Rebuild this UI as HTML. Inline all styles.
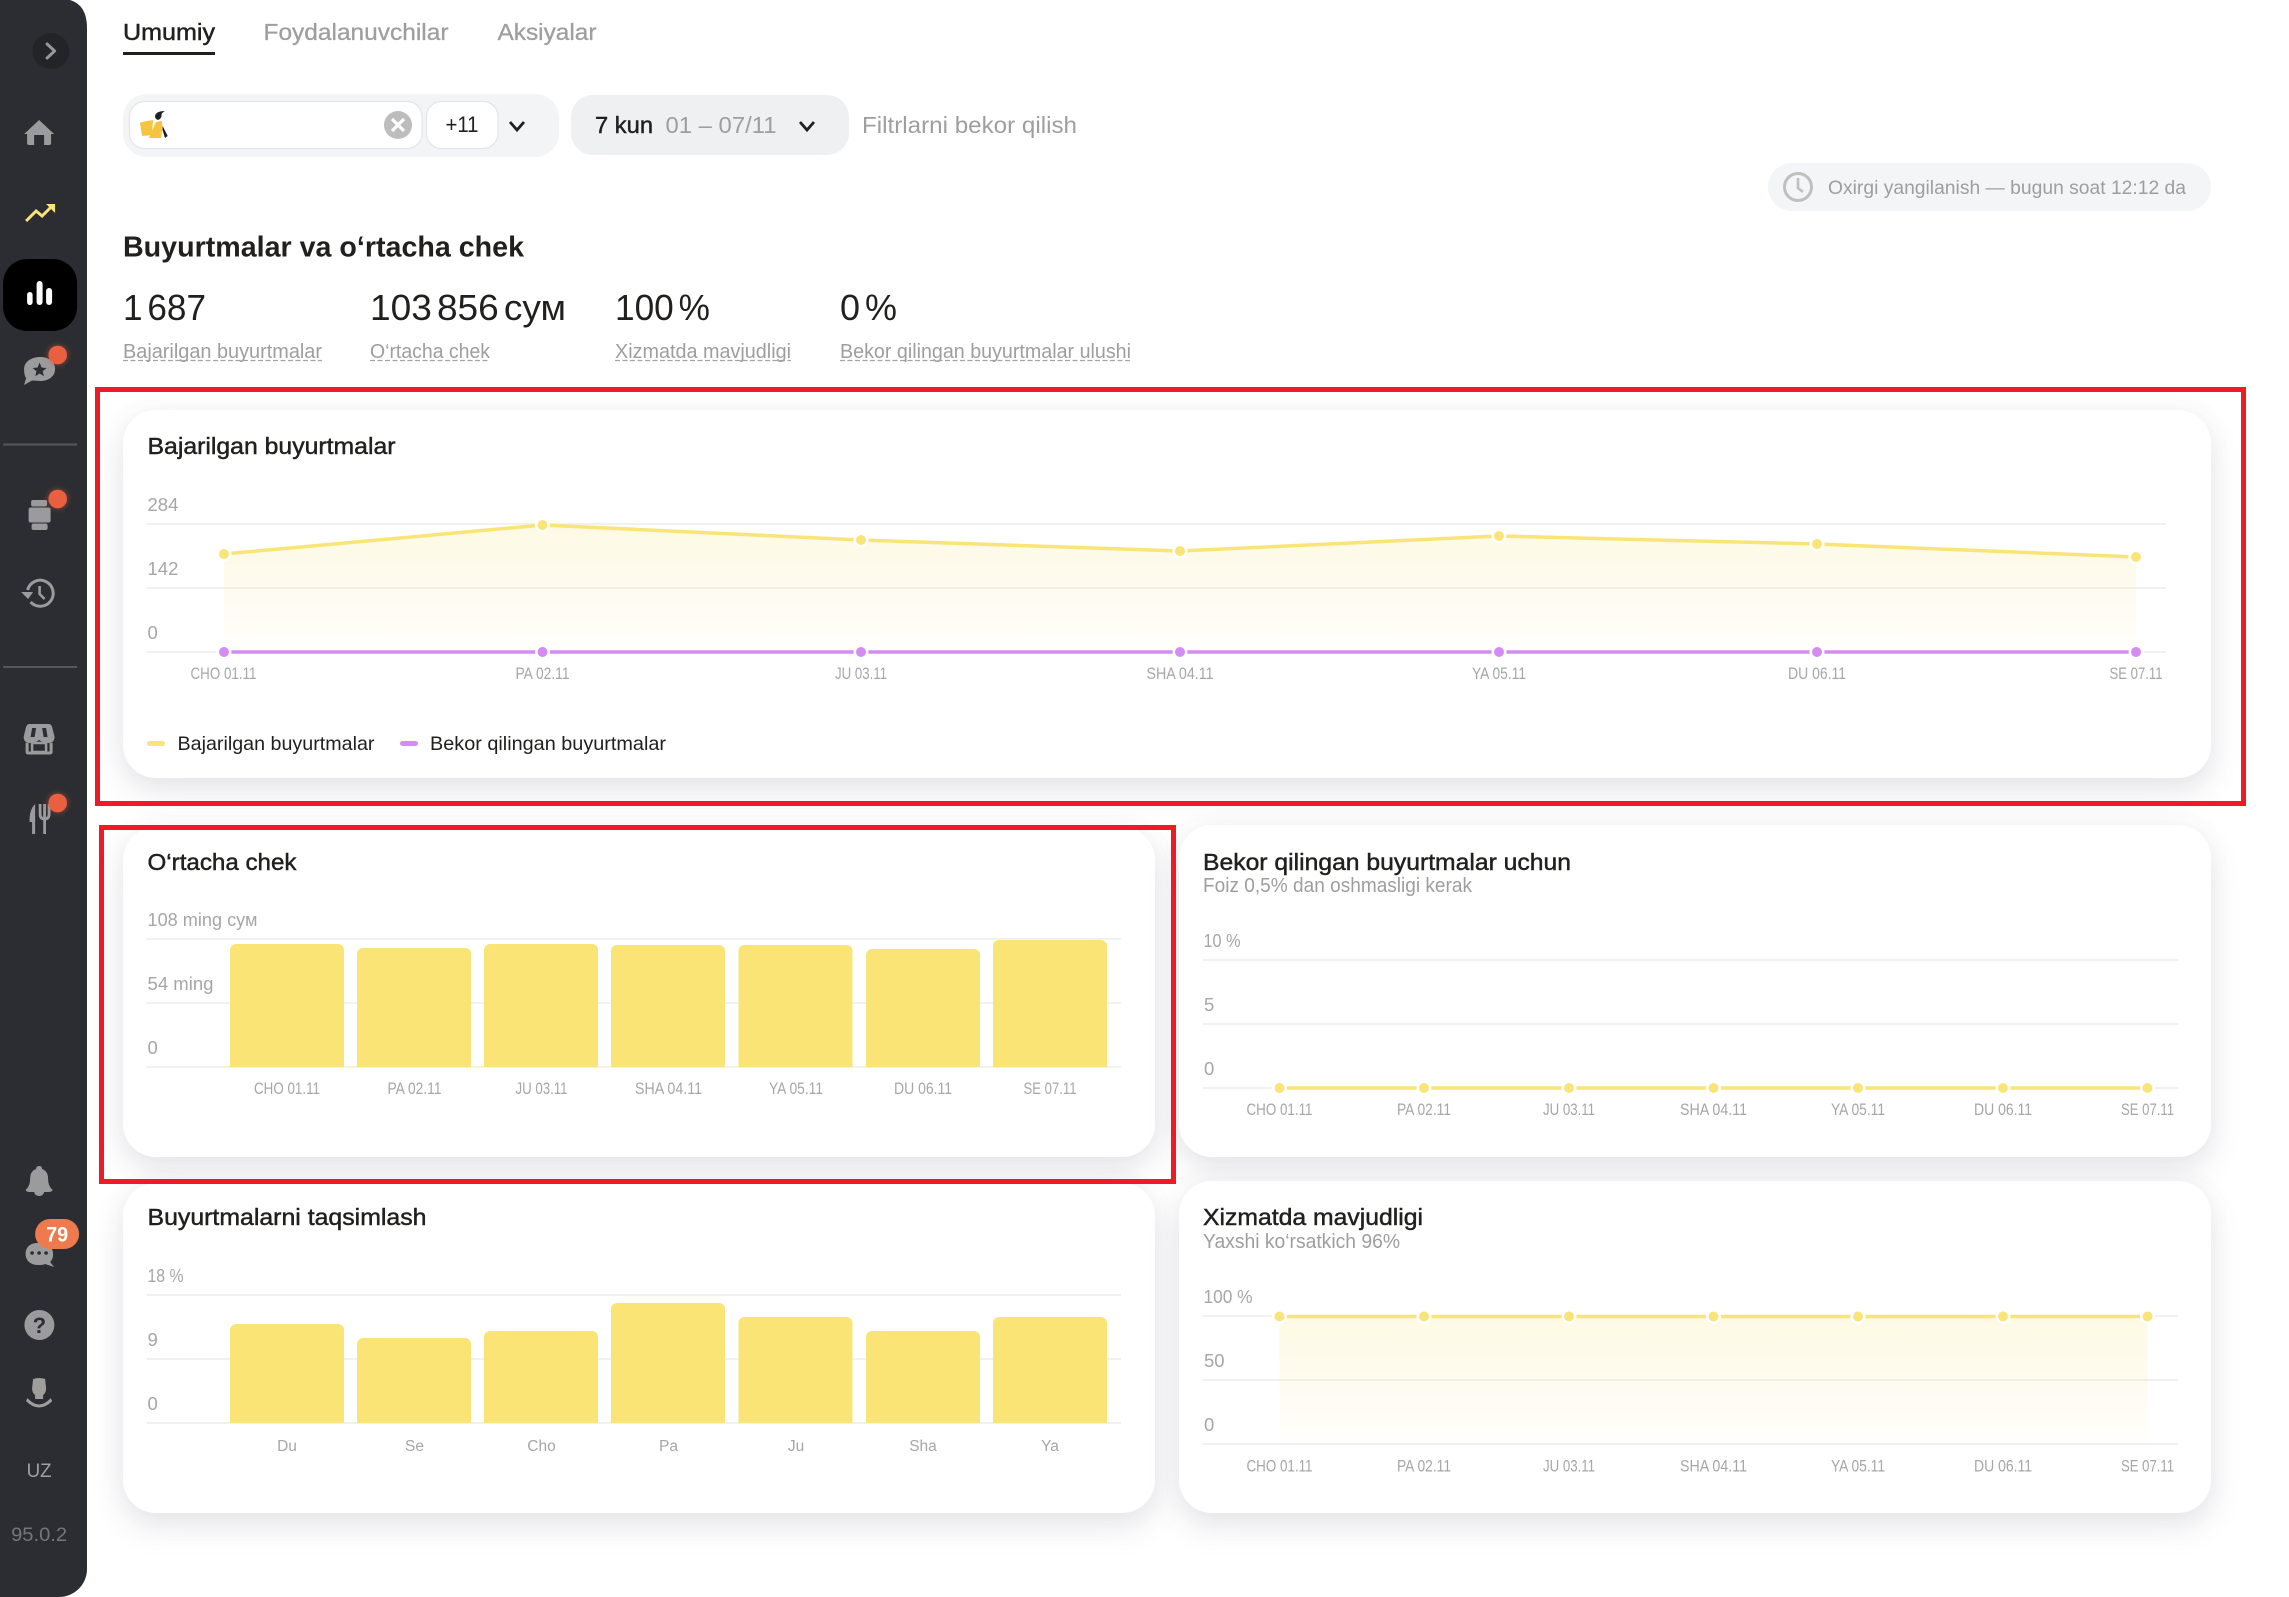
<!DOCTYPE html>
<html lang="uz">
<head>
<meta charset="utf-8">
<title>Statistika</title>
<style>
html,body{margin:0;padding:0;background:#fff;width:2289px;height:1597px;overflow:hidden}
.card{position:absolute;background:#fff;border-radius:33px;box-shadow:0 14px 32px rgba(90,95,110,.14),0 0 24px rgba(90,95,110,.05)}
svg{position:absolute;left:0;top:0}
text{font-family:"Liberation Sans",sans-serif;fill:#21201f}
.g{fill:#a3a3a3}
.s{fill:#9e9e9e}
.m{stroke:#21201f;stroke-width:.45px}
.gl{stroke:#000;stroke-opacity:.055;stroke-width:2}
.ax{font-size:17px;fill:#a6a6a6;text-anchor:middle}
.dy{font-size:15.5px}
.yl{font-size:18.5px;fill:#a6a6a6}
.ic{fill:#9b9b9d}
.t{font-size:23px}
.st{font-size:36px;word-spacing:-5px}
</style>
</head>
<body>
<div class="card" style="left:123px;top:410px;width:2088px;height:368px"></div>
<div class="card" style="left:123px;top:827px;width:1032px;height:330px"></div>
<div class="card" style="left:1179px;top:825px;width:1032px;height:332px"></div>
<div class="card" style="left:123px;top:1183px;width:1032px;height:330px"></div>
<div class="card" style="left:1179px;top:1181px;width:1032px;height:332px"></div>

<svg width="2289" height="1597" viewBox="0 0 2289 1597" xmlns="http://www.w3.org/2000/svg">
<defs>
<linearGradient id="ar" x1="0" y1="0" x2="0" y2="1"><stop offset="0" stop-color="#fdf9e4"/><stop offset="1" stop-color="#fffefb"/></linearGradient>
<clipPath id="c1"><rect x="200" y="900" width="950" height="167"/></clipPath>
<clipPath id="c2"><rect x="200" y="1260" width="950" height="163"/></clipPath>
<filter id="glow" x="-60%" y="-60%" width="220%" height="220%"><feGaussianBlur stdDeviation="3"/></filter>
</defs>

<!-- Sidebar -->
<path d="M0 0H70Q87 5 87 28V1569A28 28 0 0 1 59 1597H0Z" fill="#2b2d32"/>
<g transform="translate(-0.9 0)">
<ellipse cx="51.7" cy="51" rx="18.5" ry="18" fill="#222428"/>
<path d="M48 44L55.500 51L48 58" fill="none" stroke="#97979a" stroke-width="3" stroke-linecap="round" stroke-linejoin="round"/>
<path class="ic" d="M40 120L55 134H52V143Q52 145 50 145H45V135H35V145H30Q28 145 28 143V134H25Z"/>
<path d="M27 221L37 211L43 216L52 207" fill="none" stroke="#f9e477" stroke-width="3"/>
<path d="M47 204H56V213Z" fill="#f9e477"/>
<rect x="4" y="259" width="74" height="72" rx="24" fill="#000"/>
<rect x="28" y="292" width="5.500" height="13" rx="2.700" fill="#fff"/>
<rect x="37.500" y="281" width="6" height="24" rx="3" fill="#fff"/>
<rect x="47" y="288" width="6" height="17" rx="3" fill="#fff"/>
<path class="ic" d="M41 357C50 357 56 362 56 369C56 376 50 381 41 381C37 381 34 380 32 381L25 385L27 378C25.500 376 25 373 25 369C25 362 32 357 41 357Z"/>
<path d="M40.500 362.500L42.500 367.500L47.500 368L43.600 371.300L44.800 376.300L40.500 373.500L36.200 376.300L37.400 371.300L33.500 368L38.500 367.500Z" fill="#2b2d32"/>
<circle cx="58.600" cy="355" r="10" fill="#ea5f40" opacity=".45" filter="url(#glow)"/>
<circle cx="58.600" cy="355" r="9.300" fill="#ea5f40"/>
<rect x="4" y="443.500" width="74" height="2" fill="#55575c"/>
<rect x="32" y="500" width="16" height="6.500" rx="2" class="ic"/>
<rect x="29.500" y="507.500" width="22" height="15" rx="2" class="ic"/>
<rect x="32.500" y="523.500" width="16" height="6.500" rx="2" class="ic"/>
<circle cx="58.600" cy="499" r="10" fill="#ea5f40" opacity=".45" filter="url(#glow)"/>
<circle cx="58.600" cy="499" r="9.300" fill="#ea5f40"/>
<path d="M28.500 590A13 13 0 1 1 31.500 602" fill="none" stroke="#9b9b9d" stroke-width="3"/>
<path class="ic" d="M22 592H34L29 599Z"/>
<path d="M40.500 586V594L45.500 599" fill="none" stroke="#9b9b9d" stroke-width="2.600"/>
<rect x="4" y="666" width="74" height="2" fill="#55575c"/>
<path class="ic" d="M30 724H50Q52 724 53 727L55.500 737Q55 743 50 743Q44 743 40 740Q36 743 30 743Q25 743 24.500 737L27 727Q28 724 30 724Z"/>
<path d="M33 728H37L35.500 737H31.500ZM43 728H47L48.500 737H44.500Z" fill="#2b2d32"/>
<path d="M28 743V752Q28 753 29.500 753H50.500Q52 753 52 752V743" fill="none" stroke="#9b9b9d" stroke-width="3"/>
<rect x="33" y="743" width="14" height="9" fill="none" stroke="#9b9b9d" stroke-width="2.500"/>
<path class="ic" d="M36 804Q30 810 30.500 822H33V834H36Z"/>
<path d="M41 804V814Q41 819 45.500 819Q50 819 50 814V804M45.500 804V834" fill="none" stroke="#9b9b9d" stroke-width="2.800"/>
<circle cx="58.600" cy="803" r="10" fill="#ea5f40" opacity=".45" filter="url(#glow)"/>
<circle cx="58.600" cy="803" r="9.300" fill="#ea5f40"/>
<path class="ic" d="M40 1166Q43 1166 43 1169Q49 1171 49 1179Q49 1186 53.500 1190Q53 1192 49 1192H45Q44 1196 40 1196Q36 1196 35 1192H31Q27 1192 26.500 1190Q31 1186 31 1179Q31 1171 37 1169Q37 1166 40 1166Z"/>
<path class="ic" d="M39 1243C48 1243 54 1247 54 1254C54 1258 53 1260 51 1262L55 1267L46 1264C44 1265 42 1265 39 1265C31 1265 26.500 1260 26.500 1254C26.500 1247 31 1243 39 1243Z"/>
<circle cx="33" cy="1253" r="1.800" fill="#2b2d32"/><circle cx="40" cy="1253" r="1.800" fill="#2b2d32"/><circle cx="47" cy="1253" r="1.800" fill="#2b2d32"/>
<rect x="36" y="1219" width="44" height="30" rx="15" fill="#ee7b4d"/>
<text x="58" y="1241.500" font-size="21" text-anchor="middle" textLength="22" lengthAdjust="spacingAndGlyphs" style="fill:#fff;font-weight:700">79</text>
<circle cx="40.300" cy="1325" r="15" class="ic"/>
<text x="40.300" y="1333" font-size="22" text-anchor="middle" style="fill:#2b2d32;font-weight:700">?</text>
<path d="M34 1379Q40 1377 46 1379L47 1388Q47 1393 44 1395V1399H36V1395Q33 1393 33 1388Z" fill="#a09e9c"/>
<path d="M28.500 1399Q40 1411 51.500 1399L52.500 1401Q40 1413 27.500 1401Z" fill="#a09e9c" stroke="#a09e9c" stroke-width="1"/>
<text x="27.500" y="1477" font-size="19" textLength="25" lengthAdjust="spacingAndGlyphs" style="fill:#a0a0a2">UZ</text>
<text x="12" y="1541" font-size="19" textLength="56" lengthAdjust="spacingAndGlyphs" style="fill:#75767a">95.0.2</text>
</g>

<!-- Tabs -->
<text x="123" y="40" font-size="23" class="m" textLength="92" lengthAdjust="spacingAndGlyphs">Umumiy</text>
<rect x="123" y="52" width="92" height="3" fill="#21201f"/>
<text x="263.500" y="40" font-size="23" class="s" textLength="185" lengthAdjust="spacingAndGlyphs" stroke="#9e9e9e" stroke-width=".3">Foydalanuvchilar</text>
<text x="497.500" y="40" font-size="23" class="s" textLength="99" lengthAdjust="spacingAndGlyphs" stroke="#9e9e9e" stroke-width=".3">Aksiyalar</text>

<!-- Filters -->
<rect x="123" y="94" width="436" height="63" rx="24" fill="#f3f4f5"/>
<rect x="129.500" y="101.500" width="292.500" height="47" rx="15" fill="#fff" stroke="#e4e5e7" stroke-width="1.200"/>
<path d="M140 123L142 122L153 120L152 135L142 136Z" fill="#f5c53f"/>
<path d="M156 122L162 121L162.500 128L161 138H149Z" fill="#f5c53f"/>
<path d="M155 116Q156 111 165 111Q161 113 161.500 116Q161 119 158 120Q155 119 155 116Z" fill="#21201f"/>
<path d="M162.700 126L167.700 136L165 138L162.500 130Z" fill="#21201f"/>
<circle cx="398" cy="125" r="14" fill="#bdbdbd"/>
<path d="M392 119L404 131M404 119L392 131" stroke="#fff" stroke-width="3.200"/>
<rect x="426.500" y="101.500" width="71.500" height="47" rx="15" fill="#fff" stroke="#e4e5e7" stroke-width="1.200"/>
<text x="445.500" y="132" font-size="22" textLength="33" lengthAdjust="spacingAndGlyphs">+11</text>
<path d="M510 122L517 130L524 122" fill="none" stroke="#21201f" stroke-width="2.800"/>
<rect x="571" y="95" width="278" height="60" rx="22" fill="#eff0f2"/>
<text x="595" y="133" font-size="23" class="m" textLength="58" lengthAdjust="spacingAndGlyphs">7 kun</text>
<text x="665.500" y="133" font-size="23" class="s" textLength="111" lengthAdjust="spacingAndGlyphs">01 – 07/11</text>
<path d="M800 122L807 130L814 122" fill="none" stroke="#21201f" stroke-width="2.800"/>
<text x="862" y="133" font-size="23" class="s" textLength="215" lengthAdjust="spacingAndGlyphs">Filtrlarni bekor qilish</text>

<!-- Pill -->
<rect x="1768" y="163" width="443" height="48" rx="24" fill="#f4f5f6"/>
<circle cx="1798" cy="187" r="13.500" fill="none" stroke="#bfbfbf" stroke-width="3"/>
<path d="M1798 178V188L1803 192" fill="none" stroke="#bfbfbf" stroke-width="2.600"/>
<text x="1828" y="194" font-size="19" class="s" textLength="358" lengthAdjust="spacingAndGlyphs">Oxirgi yangilanish — bugun soat 12:12 da</text>

<!-- Heading + stats -->
<text x="123" y="256.500" font-size="29" font-weight="700" textLength="401" lengthAdjust="spacingAndGlyphs">Buyurtmalar va o‘rtacha chek</text>
<text x="123" y="320" class="st" textLength="83" lengthAdjust="spacingAndGlyphs">1 687</text>
<text x="370" y="320" class="st" textLength="196" lengthAdjust="spacingAndGlyphs">103 856 сум</text>
<text x="615" y="320" class="st" textLength="95" lengthAdjust="spacingAndGlyphs">100 %</text>
<text x="840" y="320" class="st" textLength="57" lengthAdjust="spacingAndGlyphs">0 %</text>
<text x="123" y="358" font-size="20" class="s" textLength="199" lengthAdjust="spacingAndGlyphs">Bajarilgan buyurtmalar</text>
<text x="370" y="358" font-size="20" class="s" textLength="120" lengthAdjust="spacingAndGlyphs">O‘rtacha chek</text>
<text x="615" y="358" font-size="20" class="s" textLength="176" lengthAdjust="spacingAndGlyphs">Xizmatda mavjudligi</text>
<text x="840" y="358" font-size="20" class="s" textLength="291" lengthAdjust="spacingAndGlyphs">Bekor qilingan buyurtmalar ulushi</text>
<g stroke="#a3a3a3" stroke-width="1.300" stroke-dasharray="5 2.500">
<path d="M123 360.500H322M370 360.500H490M615 360.500H791M840 360.500H1131"/>
</g>

<!-- Card 1 -->
<text x="147.500" y="454" class="t m" textLength="248" lengthAdjust="spacingAndGlyphs">Bajarilgan buyurtmalar</text>
<path d="M224 554L542.500 525L861 540L1180 551L1499 536L1817 544L2136 557V652H224Z" fill="url(#ar)"/>
<path class="gl" d="M147 524H2166M147 588H2166M147 652H2166"/>
<text x="147.500" y="511" class="yl">284</text>
<text x="147.500" y="575" class="yl">142</text>
<text x="147.500" y="639" class="yl">0</text>
<path d="M224 554L542.500 525L861 540L1180 551L1499 536L1817 544L2136 557" fill="none" stroke="#f9e477" stroke-width="3.500"/>
<g fill="#fff">
<circle cx="224" cy="554" r="7.500"/><circle cx="542.500" cy="525" r="7.500"/><circle cx="861" cy="540" r="7.500"/><circle cx="1180" cy="551" r="7.500"/><circle cx="1499" cy="536" r="7.500"/><circle cx="1817" cy="544" r="7.500"/><circle cx="2136" cy="557" r="7.500"/>
</g>
<g fill="#f9e477">
<circle cx="224" cy="554" r="5"/><circle cx="542.500" cy="525" r="5"/><circle cx="861" cy="540" r="5"/><circle cx="1180" cy="551" r="5"/><circle cx="1499" cy="536" r="5"/><circle cx="1817" cy="544" r="5"/><circle cx="2136" cy="557" r="5"/>
</g>
<path d="M224 652H2136" stroke="#d38cf2" stroke-width="3.500"/>
<g fill="#fff">
<circle cx="224" cy="652" r="7.500"/><circle cx="542.500" cy="652" r="7.500"/><circle cx="861" cy="652" r="7.500"/><circle cx="1180" cy="652" r="7.500"/><circle cx="1499" cy="652" r="7.500"/><circle cx="1817" cy="652" r="7.500"/><circle cx="2136" cy="652" r="7.500"/>
</g>
<g fill="#d38cf2">
<circle cx="224" cy="652" r="5"/><circle cx="542.500" cy="652" r="5"/><circle cx="861" cy="652" r="5"/><circle cx="1180" cy="652" r="5"/><circle cx="1499" cy="652" r="5"/><circle cx="1817" cy="652" r="5"/><circle cx="2136" cy="652" r="5"/>
</g>
<text x="223.500" y="679" class="ax" textLength="66" lengthAdjust="spacingAndGlyphs">CHO 01.11</text>
<text x="542.500" y="679" class="ax" textLength="54" lengthAdjust="spacingAndGlyphs">PA 02.11</text>
<text x="861" y="679" class="ax" textLength="52" lengthAdjust="spacingAndGlyphs">JU 03.11</text>
<text x="1180" y="679" class="ax" textLength="67" lengthAdjust="spacingAndGlyphs">SHA 04.11</text>
<text x="1499" y="679" class="ax" textLength="54" lengthAdjust="spacingAndGlyphs">YA 05.11</text>
<text x="1817" y="679" class="ax" textLength="58" lengthAdjust="spacingAndGlyphs">DU 06.11</text>
<text x="2136" y="679" class="ax" textLength="53" lengthAdjust="spacingAndGlyphs">SE 07.11</text>
<rect x="147" y="741" width="18" height="5" rx="2.500" fill="#f9e477"/>
<text x="177.500" y="750" font-size="19.500" textLength="197" lengthAdjust="spacingAndGlyphs">Bajarilgan buyurtmalar</text>
<rect x="400" y="741" width="18" height="5" rx="2.500" fill="#d38cf2"/>
<text x="430" y="750" font-size="19.500" textLength="236" lengthAdjust="spacingAndGlyphs">Bekor qilingan buyurtmalar</text>

<!-- Card 2 -->
<text x="147.500" y="870" class="t m" textLength="149" lengthAdjust="spacingAndGlyphs">O‘rtacha chek</text>
<path class="gl" d="M147 939H1121M147 1003H1121M147 1067H1121"/>
<text x="147.500" y="926" class="yl" textLength="110" lengthAdjust="spacingAndGlyphs">108 ming сум</text>
<text x="147.500" y="990" class="yl" textLength="66" lengthAdjust="spacingAndGlyphs">54 ming</text>
<text x="147.500" y="1054" class="yl">0</text>
<g clip-path="url(#c1)" fill="#f9e475">
<rect x="230" y="944" width="114" height="140" rx="6"/>
<rect x="357" y="948" width="114" height="140" rx="6"/>
<rect x="484" y="944" width="114" height="140" rx="6"/>
<rect x="611" y="945" width="114" height="140" rx="6"/>
<rect x="738.500" y="945" width="114" height="140" rx="6"/>
<rect x="866" y="949" width="114" height="140" rx="6"/>
<rect x="993" y="940" width="114" height="140" rx="6"/>
</g>
<text x="287" y="1094" class="ax" textLength="66" lengthAdjust="spacingAndGlyphs">CHO 01.11</text>
<text x="414.500" y="1094" class="ax" textLength="54" lengthAdjust="spacingAndGlyphs">PA 02.11</text>
<text x="541.500" y="1094" class="ax" textLength="52" lengthAdjust="spacingAndGlyphs">JU 03.11</text>
<text x="668.500" y="1094" class="ax" textLength="67" lengthAdjust="spacingAndGlyphs">SHA 04.11</text>
<text x="796" y="1094" class="ax" textLength="54" lengthAdjust="spacingAndGlyphs">YA 05.11</text>
<text x="923" y="1094" class="ax" textLength="58" lengthAdjust="spacingAndGlyphs">DU 06.11</text>
<text x="1050" y="1094" class="ax" textLength="53" lengthAdjust="spacingAndGlyphs">SE 07.11</text>

<!-- Card 3 -->
<text x="1203" y="870" class="t m" textLength="368" lengthAdjust="spacingAndGlyphs">Bekor qilingan buyurtmalar uchun</text>
<text x="1203" y="892" font-size="20" class="s" textLength="269" lengthAdjust="spacingAndGlyphs">Foiz 0,5% dan oshmasligi kerak</text>
<path class="gl" d="M1203 960H2178M1203 1024H2178M1203 1088H2178"/>
<text x="1203.500" y="947" class="yl" textLength="37" lengthAdjust="spacingAndGlyphs">10 %</text>
<text x="1204" y="1011" class="yl">5</text>
<text x="1204" y="1075" class="yl">0</text>
<path d="M1279.500 1088H2147.500" stroke="#f9e477" stroke-width="3.500"/>
<g fill="#fff">
<circle cx="1279.500" cy="1088" r="7.500"/><circle cx="1424" cy="1088" r="7.500"/><circle cx="1569" cy="1088" r="7.500"/><circle cx="1713.500" cy="1088" r="7.500"/><circle cx="1858" cy="1088" r="7.500"/><circle cx="2003" cy="1088" r="7.500"/><circle cx="2147.500" cy="1088" r="7.500"/>
</g>
<g fill="#f9e477">
<circle cx="1279.500" cy="1088" r="5"/><circle cx="1424" cy="1088" r="5"/><circle cx="1569" cy="1088" r="5"/><circle cx="1713.500" cy="1088" r="5"/><circle cx="1858" cy="1088" r="5"/><circle cx="2003" cy="1088" r="5"/><circle cx="2147.500" cy="1088" r="5"/>
</g>
<text x="1279.500" y="1115" class="ax" textLength="66" lengthAdjust="spacingAndGlyphs">CHO 01.11</text>
<text x="1424" y="1115" class="ax" textLength="54" lengthAdjust="spacingAndGlyphs">PA 02.11</text>
<text x="1569" y="1115" class="ax" textLength="52" lengthAdjust="spacingAndGlyphs">JU 03.11</text>
<text x="1713.500" y="1115" class="ax" textLength="67" lengthAdjust="spacingAndGlyphs">SHA 04.11</text>
<text x="1858" y="1115" class="ax" textLength="54" lengthAdjust="spacingAndGlyphs">YA 05.11</text>
<text x="2003" y="1115" class="ax" textLength="58" lengthAdjust="spacingAndGlyphs">DU 06.11</text>
<text x="2147.500" y="1115" class="ax" textLength="53" lengthAdjust="spacingAndGlyphs">SE 07.11</text>

<!-- Card 4 -->
<text x="147.500" y="1225" class="t m" textLength="279" lengthAdjust="spacingAndGlyphs">Buyurtmalarni taqsimlash</text>
<path class="gl" d="M147 1295H1121M147 1359H1121M147 1423H1121"/>
<text x="147.500" y="1282" class="yl" textLength="36" lengthAdjust="spacingAndGlyphs">18 %</text>
<text x="147.500" y="1346" class="yl">9</text>
<text x="147.500" y="1410" class="yl">0</text>
<g clip-path="url(#c2)" fill="#f9e475">
<rect x="230" y="1324" width="114" height="130" rx="6"/>
<rect x="357" y="1338" width="114" height="130" rx="6"/>
<rect x="484" y="1331" width="114" height="130" rx="6"/>
<rect x="611" y="1303" width="114" height="130" rx="6"/>
<rect x="738.500" y="1317" width="114" height="130" rx="6"/>
<rect x="866" y="1331" width="114" height="130" rx="6"/>
<rect x="993" y="1317" width="114" height="130" rx="6"/>
</g>
<text x="287" y="1451" class="ax dy">Du</text>
<text x="414.500" y="1451" class="ax dy">Se</text>
<text x="541.500" y="1451" class="ax dy">Cho</text>
<text x="668.500" y="1451" class="ax dy">Pa</text>
<text x="796" y="1451" class="ax dy">Ju</text>
<text x="923" y="1451" class="ax dy">Sha</text>
<text x="1050" y="1451" class="ax dy">Ya</text>

<!-- Card 5 -->
<text x="1203" y="1225" class="t m" textLength="220" lengthAdjust="spacingAndGlyphs">Xizmatda mavjudligi</text>
<text x="1203" y="1248" font-size="20" class="s" textLength="197" lengthAdjust="spacingAndGlyphs">Yaxshi ko‘rsatkich 96%</text>
<rect x="1279.500" y="1316" width="868" height="128" fill="url(#ar)"/>
<path class="gl" d="M1203 1316H2178M1203 1380H2178M1203 1444H2178"/>
<text x="1203.500" y="1303" class="yl" textLength="49" lengthAdjust="spacingAndGlyphs">100 %</text>
<text x="1204" y="1367" class="yl">50</text>
<text x="1204" y="1431" class="yl">0</text>
<path d="M1279.500 1316.500H2147.500" stroke="#f9e477" stroke-width="3.500"/>
<g fill="#fff">
<circle cx="1279.500" cy="1316.500" r="7.500"/><circle cx="1424" cy="1316.500" r="7.500"/><circle cx="1569" cy="1316.500" r="7.500"/><circle cx="1713.500" cy="1316.500" r="7.500"/><circle cx="1858" cy="1316.500" r="7.500"/><circle cx="2003" cy="1316.500" r="7.500"/><circle cx="2147.500" cy="1316.500" r="7.500"/>
</g>
<g fill="#f9e477">
<circle cx="1279.500" cy="1316.500" r="5"/><circle cx="1424" cy="1316.500" r="5"/><circle cx="1569" cy="1316.500" r="5"/><circle cx="1713.500" cy="1316.500" r="5"/><circle cx="1858" cy="1316.500" r="5"/><circle cx="2003" cy="1316.500" r="5"/><circle cx="2147.500" cy="1316.500" r="5"/>
</g>
<text x="1279.500" y="1471.500" class="ax" textLength="66" lengthAdjust="spacingAndGlyphs">CHO 01.11</text>
<text x="1424" y="1471.500" class="ax" textLength="54" lengthAdjust="spacingAndGlyphs">PA 02.11</text>
<text x="1569" y="1471.500" class="ax" textLength="52" lengthAdjust="spacingAndGlyphs">JU 03.11</text>
<text x="1713.500" y="1471.500" class="ax" textLength="67" lengthAdjust="spacingAndGlyphs">SHA 04.11</text>
<text x="1858" y="1471.500" class="ax" textLength="54" lengthAdjust="spacingAndGlyphs">YA 05.11</text>
<text x="2003" y="1471.500" class="ax" textLength="58" lengthAdjust="spacingAndGlyphs">DU 06.11</text>
<text x="2147.500" y="1471.500" class="ax" textLength="53" lengthAdjust="spacingAndGlyphs">SE 07.11</text>

<!-- Red annotation frames -->
<rect x="97.500" y="389.500" width="2146" height="414" fill="none" stroke="#ed1c24" stroke-width="5"/>
<rect x="101.500" y="827.500" width="1072" height="354" fill="none" stroke="#ed1c24" stroke-width="5"/>
</svg>
</body>
</html>
